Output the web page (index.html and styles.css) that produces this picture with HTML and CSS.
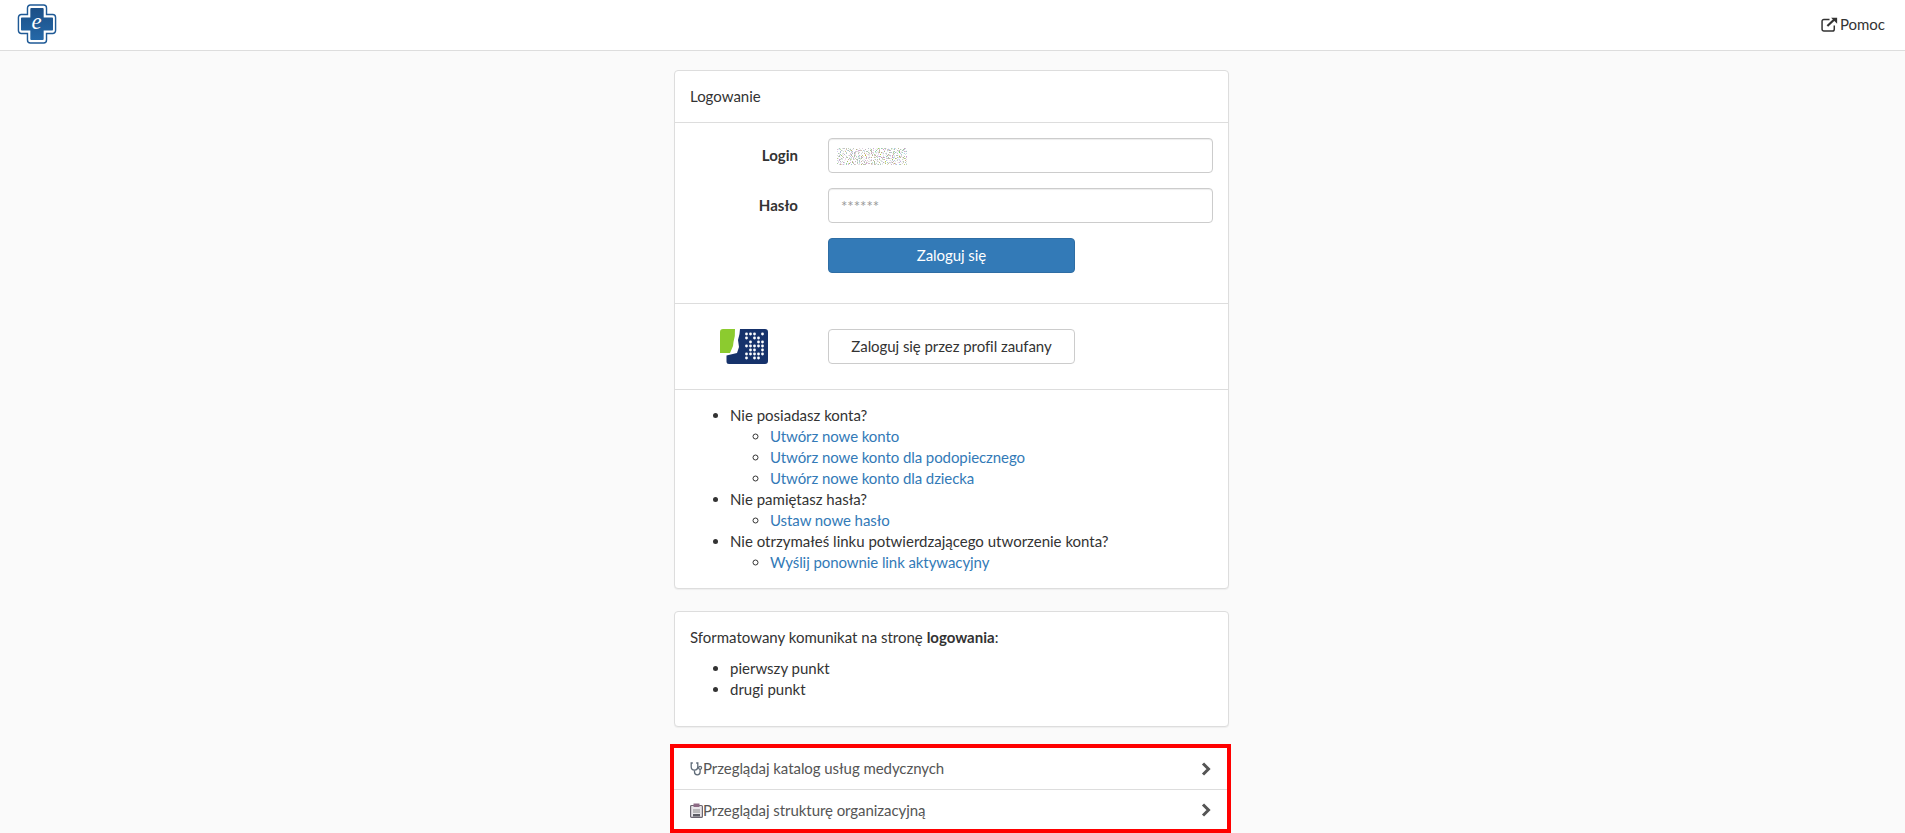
FILE: index.html
```html
<!DOCTYPE html>
<html lang="pl">
<head>
  <meta charset="UTF-8" />
  <title>Logowanie</title>
  <link rel="stylesheet" href="styles.css">
</head>
<body>

  <!-- top bar -->
  <nav class="topbar">
    <a href="#" class="brand">
      <svg width="40" height="40" viewBox="0 0 42 40" preserveAspectRatio="none">
        <defs>
          <linearGradient id="crossFill" x1="0" y1="0" x2="0" y2="1">
            <stop offset="0" stop-color="#1c4f86"/>
            <stop offset="1" stop-color="#2468a8"/>
          </linearGradient>
        </defs>
        <path d="M14 1h14a3 3 0 0 1 3 3v6.500h6.500a3 3 0 0 1 3 3v13a3 3 0 0 1-3 3H31V36a3 3 0 0 1-3 3H14a3 3 0 0 1-3-3v-6.500H4.500a3 3 0 0 1-3-3v-13a3 3 0 0 1 3-3H11V4a3 3 0 0 1 3-3z" fill="#fff" stroke="#1f5a96" stroke-width="1.500"/>
        <path d="M15 4h12a1 1 0 0 1 1 1v8.500h9a.8.8 0 0 1 .8.8v11.400a.8.8 0 0 1-.8.8h-9V35a1 1 0 0 1-1 1H15a1 1 0 0 1-1-1v-8.500H5a.8.8 0 0 1-.8-.8V14.300a.8.8 0 0 1 .8-.8h9V5a1 1 0 0 1 1-1z" fill="url(#crossFill)"/>
        <text x="20.500" y="25" class="brand-e">e</text>
      </svg>
    </a>
    <a href="#" class="help-link">
      <svg width="17" height="15" viewBox="0 0 16 14" fill="none" stroke="#333">
        <path d="M12.500 8v3.500a1.700 1.700 0 0 1-1.700 1.700H2.700A1.700 1.700 0 0 1 1 11.500V4a1.700 1.700 0 0 1 1.700-1.700H8" stroke-width="1.400"/>
        <path d="M6 8.500 13 1.800" stroke-width="2"/>
        <path d="M9.500.6h5.700v5.700z" fill="#333" stroke="none"/>
      </svg>
      Pomoc
    </a>
  </nav>

  <main class="content">

    <section class="panel">
      <div class="panel-heading">Logowanie</div>

      <form class="login-form">
        <label for="login">Login</label>
        <div class="field">
          <input type="text" id="login" class="form-control" />
          <svg class="noise" width="70" height="17">
            <filter id="grain" x="0" y="0" width="100%" height="100%">
              <feTurbulence type="fractalNoise" baseFrequency="0.85" numOctaves="2" seed="7" />
              <feColorMatrix type="matrix" values="1.200 0 0 0 -.25  0 1.100 0 0 -.2  0 0 1.400 0 -.25  5 5 0 0 -5" />
            </filter>
            <rect width="70" height="17" filter="url(#grain)" />
          </svg>
        </div>

        <label for="haslo">Hasło</label>
        <input type="password" id="haslo" class="form-control" placeholder="******" />

        <div class="submit-cell">
          <button type="button" class="btn btn-primary">Zaloguj się</button>
        </div>
      </form>

      <div class="trusted-row">
        <svg class="trusted-logo" width="48" height="36" viewBox="0 0 48 36">
          <path d="M3 0H15L14.800 7 13.500 13 13 17 10 24H0V3a3 3 0 0 1 3-3z" fill="#8ccb2f"/>
          <path d="M20 0H45a3 3 0 0 1 3 3V32a3 3 0 0 1-3 3H9a2.500 2.500 0 0 1-2.500-2.500V26.500L17 24 19 18 18 11 19.500 5z" fill="#16326b"/>
          <g fill="#fff" transform="translate(.5 -1)">
            <circle cx="26" cy="6" r="1.400"/><circle cx="30" cy="6" r="1.400"/><circle cx="34" cy="6" r="1.400"/><circle cx="42" cy="6" r="1.400"/>
            <circle cx="26" cy="10" r="1.400"/><circle cx="34" cy="10" r="1.400"/><circle cx="38" cy="10" r="1.400"/>
            <circle cx="30" cy="14" r="1.400"/><circle cx="38" cy="14" r="1.400"/><circle cx="42" cy="14" r="1.400"/>
            <circle cx="26" cy="18" r="1.400"/><circle cx="30" cy="18" r="1.400"/><circle cx="34" cy="18" r="1.400"/><circle cx="38" cy="18" r="1.400"/><circle cx="42" cy="18" r="1.400"/>
            <circle cx="30" cy="22" r="1.400"/><circle cx="34" cy="22" r="1.400"/><circle cx="42" cy="22" r="1.400"/>
            <circle cx="26" cy="26" r="1.400"/><circle cx="30" cy="26" r="1.400"/><circle cx="34" cy="26" r="1.400"/><circle cx="38" cy="26" r="1.400"/><circle cx="42" cy="26" r="1.400"/>
            <circle cx="26" cy="30" r="1.400"/><circle cx="34" cy="30" r="1.400"/><circle cx="38" cy="30" r="1.400"/>
          </g>
        </svg>
        <button type="button" class="btn btn-default">Zaloguj się przez profil zaufany</button>
      </div>

      <div class="panel-links">
        <ul>
          <li>Nie posiadasz konta?
            <ul>
              <li><a href="#">Utwórz nowe konto</a></li>
              <li><a href="#">Utwórz nowe konto dla podopiecznego</a></li>
              <li><a href="#">Utwórz nowe konto dla dziecka</a></li>
            </ul>
          </li>
          <li>Nie pamiętasz hasła?
            <ul>
              <li><a href="#">Ustaw nowe hasło</a></li>
            </ul>
          </li>
          <li>Nie otrzymałeś linku potwierdzającego utworzenie konta?
            <ul>
              <li><a href="#">Wyślij ponownie link aktywacyjny</a></li>
            </ul>
          </li>
        </ul>
      </div>
    </section>

    <section class="panel notice">
      <p>Sformatowany komunikat na stronę <strong>logowania</strong>:</p>
      <ul>
        <li>pierwszy punkt</li>
        <li>drugi punkt</li>
      </ul>
    </section>

    <div class="browse-list">
      <a href="#" class="browse-item">
        <svg width="13" height="14" viewBox="0 0 13 14" fill="none" stroke="#5f6b78" stroke-width="1.300">
          <path d="M2.800 1H1.200v3.800a3.300 3.300 0 0 0 6.600 0V1H6.200"/>
          <path d="M4.500 8.500v1.500a2.800 2.800 0 0 0 5.600 0V7.500"/>
          <circle cx="10.100" cy="5.800" r="1.500"/>
        </svg>
        <span class="browse-label">Przeglądaj katalog usług medycznych</span>
        <svg class="chevron" width="10" height="14" viewBox="0 0 10 14"><path d="M2 1.500 7.500 7 2 12.500" fill="none" stroke="#555" stroke-width="3"/></svg>
      </a>
      <a href="#" class="browse-item">
        <svg width="13" height="15" viewBox="0 0 13 15">
          <rect x=".6" y="2.500" width="11.800" height="11.900" rx="1" fill="#e9e6ea" stroke="#6a6470" stroke-width="1.200"/>
          <rect x="3.500" y=".5" width="6" height="3.500" fill="#8d6a85"/>
          <path d="M3 7h7M3 9h7" stroke="#888"/>
          <rect x="3" y="11" width="7" height="2.500" fill="#5c5c64"/>
        </svg>
        <span class="browse-label">Przeglądaj strukturę organizacyjną</span>
        <svg class="chevron" width="10" height="14" viewBox="0 0 10 14"><path d="M2 1.500 7.500 7 2 12.500" fill="none" stroke="#555" stroke-width="3"/></svg>
      </a>
    </div>

  </main>
</body>
</html>
```

FILE: styles.css
```css
* {
  box-sizing: border-box;
}
body {
  margin: 0;
  background-color: #fafafa;
  color: #333;
  font-family: Lato, "Open Sans", sans-serif;
  font-size: 15px;
  line-height: 1.4;
}
a {
  color: #337ab7;
  text-decoration: none;
}
ul {
  margin: 0;
  padding-left: 40px;
}

/* top bar */
.topbar {
  display: flex;
  align-items: center;
  justify-content: space-between;
  height: 51px;
  padding: 0 20px 1px 17px;
  background-color: #fff;
  border-bottom: 1px solid #ddd;
}
.brand {
  display: flex;
  margin-top: -2px;
}
.brand-e {
  fill: #fff;
  font-family: "Liberation Serif", serif;
  font-size: 24px;
  font-style: italic;
  text-anchor: middle;
}
.help-link {
  display: flex;
  align-items: center;
  gap: 2px;
  color: #333;
}

/* main column */
.content {
  width: 555px;
  margin: 19px auto 0 674px;
}
.panel {
  margin-bottom: 22px;
  background-color: #fff;
  border: 1px solid #ddd;
  border-radius: 4px;
  box-shadow: 0 1px 1px rgba(0, 0, 0, .05);
}
.panel-heading {
  padding: 15px;
  height: 52px;
  border-bottom: 1px solid #ddd;
}

/* login form */
.login-form {
  display: grid;
  grid-template-columns: 108px 1fr;
  column-gap: 30px;
  row-gap: 15px;
  align-items: center;
  padding: 15px 15px 30px;
  border-bottom: 1px solid #ddd;
}
.login-form label {
  text-align: right;
  font-weight: 700;
}
.field {
  position: relative;
}
.noise {
  position: absolute;
  top: 10px;
  left: 9px;
}
.form-control {
  display: block;
  width: 100%;
  height: 35px;
  padding: 6px 12px;
  font: inherit;
  color: #555;
  background-color: #fff;
  border: 1px solid #ccc;
  border-radius: 4px;
  box-shadow: inset 0 1px 1px rgba(0, 0, 0, .075);
}
.form-control::placeholder {
  color: #999;
}
.submit-cell {
  grid-column: 2;
}
.btn {
  display: block;
  width: 247px;
  height: 35px;
  padding: 6px 12px;
  font: inherit;
  letter-spacing: -.06px;
  border: 1px solid transparent;
  border-radius: 4px;
}
.btn-primary {
  color: #fff;
  background-color: #337ab7;
  border-color: #2e6da4;
}
.btn-default {
  color: #333;
  background-color: #fff;
  border-color: #ccc;
}

/* profil zaufany */
.trusted-row {
  display: flex;
  align-items: center;
  height: 86px;
  padding-left: 45px;
  border-bottom: 1px solid #ddd;
}
.trusted-logo {
  margin-right: 60px;
}

.panel-links {
  padding: 15px;
}
.panel-links a {
  letter-spacing: -.08px;
}

/* notice */
.notice {
  height: 116px;
  margin-bottom: 17px;
  padding: 15px;
}
.notice p {
  margin: 0 0 10px;
}

/* browse links, with the red frame of the screenshot */
.browse-list {
  width: 561px;
  margin-left: -4px;
  border: 4px solid #f00;
  background-color: #fff;
}
.browse-item {
  display: flex;
  align-items: center;
  height: 42px;
  padding: 0 16px;
  color: #555;
  letter-spacing: -.06px;
  border-bottom: 1px solid #ddd;
}
.browse-item:last-child {
  height: 39px;
  padding-top: 1px;
  border-bottom: 0;
}
.browse-label {
  flex: 1;
}
.chevron {
  flex: none;
}
```
